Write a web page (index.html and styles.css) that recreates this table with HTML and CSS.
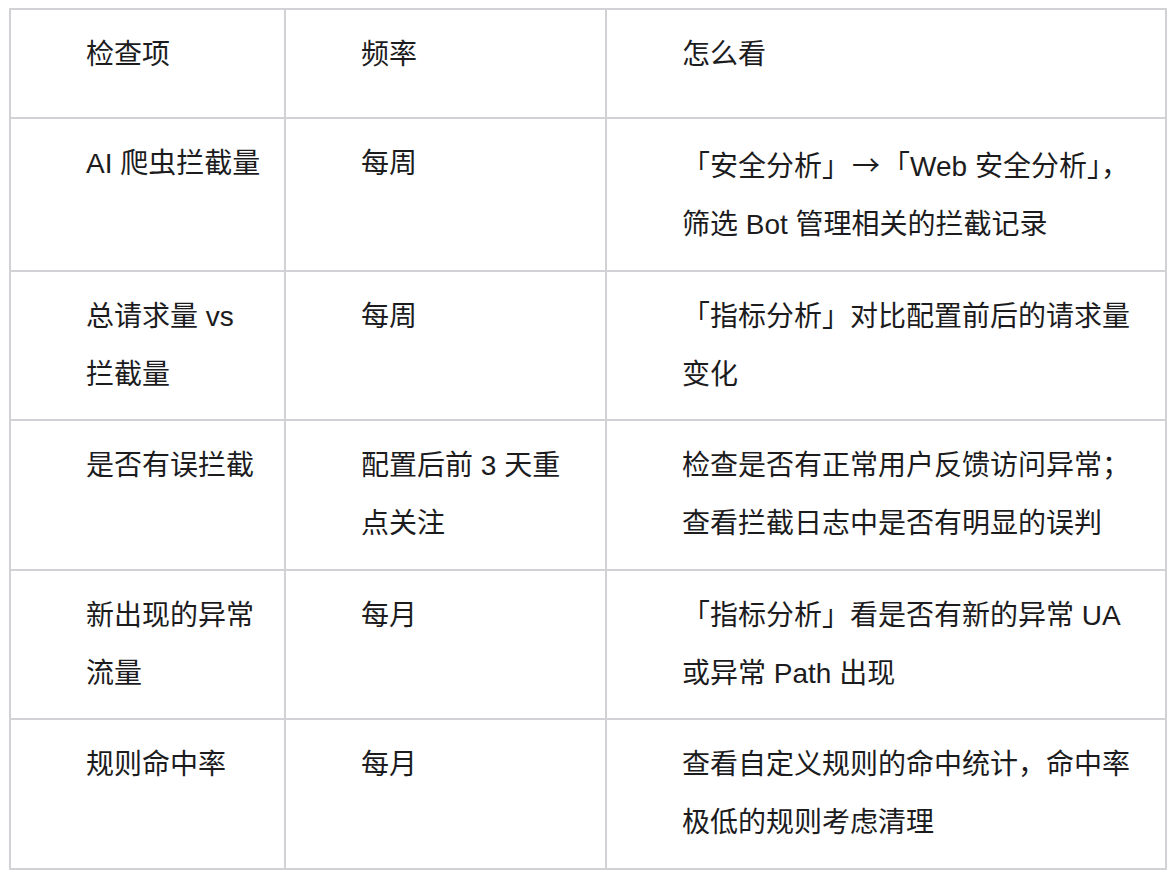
FILE: index.html
```html
<!DOCTYPE html>
<html lang="zh-CN">
<head>
<meta charset="utf-8">
<title>检查项</title>
<link rel="stylesheet" href="styles.css">
</head>
<body>
<table class="check-table">
  <colgroup>
    <col class="col-item">
    <col class="col-freq">
    <col class="col-how">
  </colgroup>
  <thead>
    <tr>
      <th>检查项</th>
      <th>频率</th>
      <th>怎么看</th>
    </tr>
  </thead>
  <tbody>
    <tr>
      <td>AI 爬虫拦截量</td>
      <td>每周</td>
      <td>「安全分析」<span class="arrow">→</span>「Web 安全分析」，筛选 Bot 管理相关的拦截记录</td>
    </tr>
    <tr>
      <td>总请求量 vs 拦截量</td>
      <td>每周</td>
      <td>「指标分析」对比配置前后的请求量变化</td>
    </tr>
    <tr>
      <td>是否有误拦截</td>
      <td>配置后前 3 天重点关注</td>
      <td>检查是否有正常用户反馈访问异常；查看拦截日志中是否有明显的误判</td>
    </tr>
    <tr>
      <td>新出现的异常流量</td>
      <td>每月</td>
      <td>「指标分析」看是否有新的异常 UA 或异常 Path 出现</td>
    </tr>
    <tr>
      <td>规则命中率</td>
      <td>每月</td>
      <td>查看自定义规则的命中统计，命中率极低的规则考虑清理</td>
    </tr>
  </tbody>
</table>
</body>
</html>
```

FILE: styles.css
```css
html, body {
  margin: 0;
  padding: 0;
  background: #ffffff;
}

body {
  padding: 8px 0 0 9px;
  font-family: "Liberation Sans", "Noto Sans CJK SC", sans-serif;
  color: #1c1c1e;
}

.check-table {
  border-collapse: separate;
  border-spacing: 0;
  table-layout: fixed;
  width: 1156px;
  border-top: 2px solid #d1d1d6;
  border-left: 2px solid #d1d1d6;
  font-size: 28px;
  line-height: 58px;
}

.col-item { width: 275px; }
.col-freq { width: 321px; }
.col-how { width: 560px; }

.check-table th,
.check-table td {
  border-right: 2px solid #d1d1d6;
  border-bottom: 2px solid #d1d1d6;
  padding: 16px 24px 15.6px 75px;
  text-align: left;
  vertical-align: top;
  font-weight: normal;
}

.check-table th:first-child,
.check-table td:first-child {
  padding-right: 18px;
}

.check-table th {
  height: 58px;
  padding-bottom: 33px;
}

.arrow {
  font-family: "Noto Sans CJK SC", sans-serif;
  margin: 0 2px;
}
```
